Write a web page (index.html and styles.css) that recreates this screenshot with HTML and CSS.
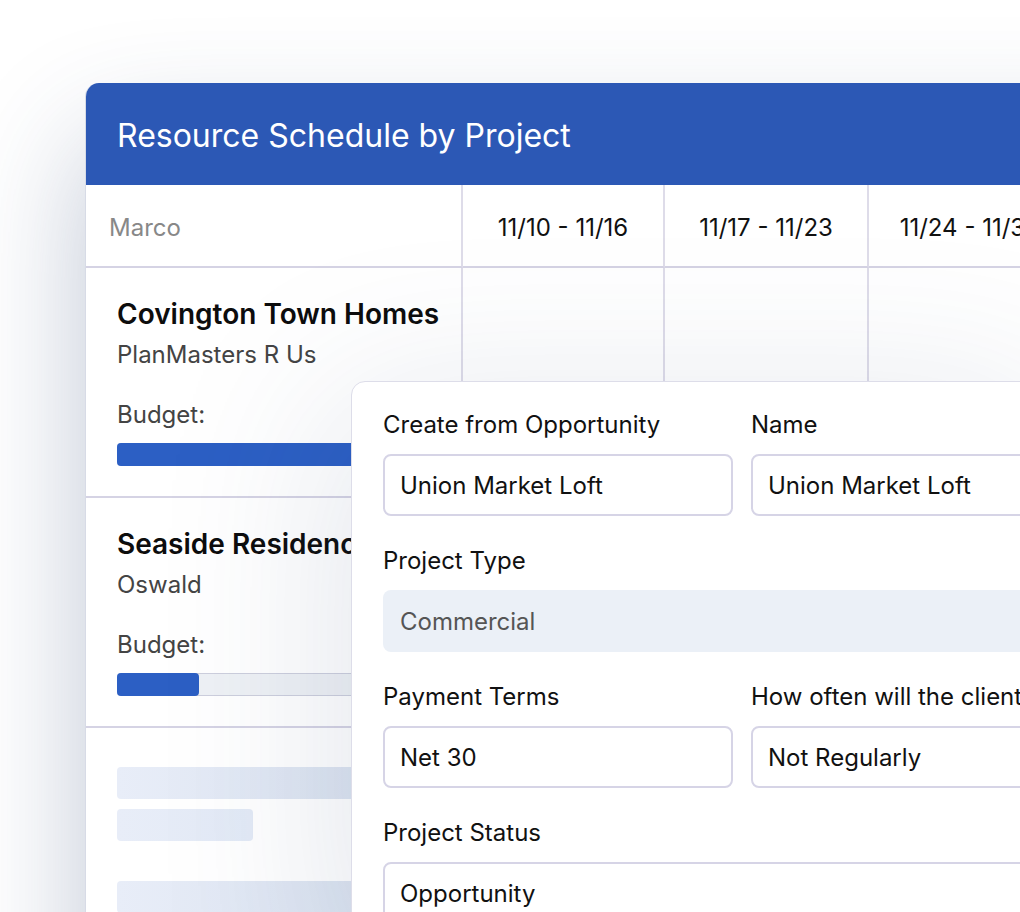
FILE: index.html
```html
<!DOCTYPE html>
<html lang="en">
<head>
<meta charset="utf-8">
<title>Resource Schedule by Project</title>
<link rel="stylesheet" href="styles.css">
</head>
<body>
<div class="stage">
  <div class="card">
    <div class="card-header">Resource Schedule by Project</div>
    <div class="grid">
      <div class="cell head head-name">Marco</div>
      <div class="cell head">11/10 - 11/16</div>
      <div class="cell head">11/17 - 11/23</div>
      <div class="cell head">11/24 - 11/30</div>
      <div class="cell head">12/01 - 12/07</div>

      <div class="cell project">
        <div class="p-title">Covington Town Homes</div>
        <div class="p-sub">PlanMasters R Us</div>
        <div class="p-budget">Budget:</div>
        <div class="bar"><div class="bar-fill" style="width:100%"></div></div>
      </div>
      <div class="cell"></div>
      <div class="cell"></div>
      <div class="cell"></div>
      <div class="cell"></div>

      <div class="cell project">
        <div class="p-title">Seaside Residence</div>
        <div class="p-sub">Oswald</div>
        <div class="p-budget">Budget:</div>
        <div class="bar"><div class="bar-fill" style="width:82px"></div></div>
      </div>
      <div class="cell"></div>
      <div class="cell"></div>
      <div class="cell"></div>
      <div class="cell"></div>

      <div class="cell project skeleton-cell">
        <div class="sk sk-long"></div>
        <div class="sk sk-short"></div>
        <div class="sk sk-long sk-gap"></div>
      </div>
      <div class="cell"></div>
      <div class="cell"></div>
      <div class="cell"></div>
      <div class="cell"></div>
    </div>
  </div>

  <div class="modal">
    <div class="form-row">
      <div class="field">
        <div class="label">Create from Opportunity</div>
        <div class="input">Union Market Loft</div>
      </div>
      <div class="field">
        <div class="label">Name</div>
        <div class="input">Union Market Loft</div>
      </div>
    </div>
    <div class="form-row">
      <div class="field full">
        <div class="label">Project Type</div>
        <div class="input filled">Commercial</div>
      </div>
    </div>
    <div class="form-row">
      <div class="field">
        <div class="label">Payment Terms</div>
        <div class="input">Net 30</div>
      </div>
      <div class="field">
        <div class="label">How often will the client be billed?</div>
        <div class="input">Not Regularly</div>
      </div>
    </div>
    <div class="form-row">
      <div class="field full">
        <div class="label">Project Status</div>
        <div class="input">Opportunity</div>
      </div>
    </div>
  </div>
</div>
</body>
</html>
```

FILE: styles.css
```css
* { box-sizing: border-box; }

html, body {
  margin: 0;
  padding: 0;
}

body {
  width: 1020px;
  height: 912px;
  overflow: hidden;
  background: #ffffff;
  font-family: Inter, "Noto Sans", "Liberation Sans", sans-serif;
  color: #111111;
}

.stage {
  position: relative;
  width: 1020px;
  height: 912px;
  overflow: hidden;
  padding: 83px 0 0 85px;
}

.card {
  width: 1200px;
  height: 1000px;
  background: #ffffff;
  border-top-left-radius: 14px;
  border-left: 1px solid #d7dbe6;
  box-shadow: 0 60px 120px rgba(45, 70, 115, 0.3);
  overflow: hidden;
}

.card-header {
  height: 102px;
  background: #2c58b5;
  color: #ffffff;
  font-size: 32px;
  display: flex;
  align-items: center;
  padding-left: 31px;
  padding-top: 2px;
}

.grid {
  display: grid;
  grid-template-columns: 377px 202px 204px 204px 204px;
  grid-template-rows: 83px 230px 230px 300px;
}

.cell {
  border-right: 2px solid #dedce9;
  border-bottom: 2px solid #d5d3e4;
}

.head {
  display: flex;
  align-items: center;
  justify-content: center;
  font-size: 24px;
  color: #111111;
  padding-top: 4px;
  white-space: nowrap;
  overflow: hidden;
}

.head-name {
  justify-content: flex-start;
  padding-left: 23px;
  color: #888888;
}

.project {
  padding: 29px 0 0 31px;
  overflow: hidden;
  white-space: nowrap;
}

.p-title {
  font-size: 28px;
  font-weight: 600;
  line-height: 34px;
  color: #0d0d0d;
}

.p-sub {
  font-size: 24px;
  line-height: 30px;
  color: #444444;
  margin-top: 9px;
}

.p-budget {
  font-size: 24px;
  line-height: 30px;
  color: #444444;
  margin-top: 30px;
}

.bar {
  margin-top: 13px;
  width: 330px;
  height: 23px;
  background: #eef1f5;
  border-top: 1px solid #cdcfdd;
  border-bottom: 1px solid #cdcfdd;
  border-radius: 4px;
  position: relative;
}

.bar-fill {
  position: absolute;
  left: 0;
  top: -1px;
  bottom: -1px;
  background: #2c5fc4;
  border-radius: 4px;
}

.skeleton-cell {
  padding-top: 39px;
  border-bottom: none;
}

.sk {
  height: 32px;
  border-radius: 4px;
  background: linear-gradient(90deg, #e8edf8 0%, #d9e2ef 100%);
}

.sk-long { width: 320px; }

.sk-short {
  width: 136px;
  margin-top: 10px;
  background: linear-gradient(90deg, #e8edf8 0%, #e3eaf6 100%);
}

.sk-gap { margin-top: 40px; }

.modal {
  position: absolute;
  left: 351px;
  top: 381px;
  width: 720px;
  height: 600px;
  background: #ffffff;
  border: 1px solid #dddde9;
  border-radius: 14px;
  padding: 29px 0 0 31px;
  box-shadow: -20px 20px 180px rgba(45, 70, 115, 0.13);
}

.form-row {
  display: flex;
  gap: 18px;
  margin-bottom: 31px;
}

.field { width: 350px; flex: none; }
.field.full { width: 720px; }

.label {
  font-size: 24px;
  line-height: 28px;
  color: #111111;
  margin-bottom: 15px;
  white-space: nowrap;
}

.input {
  height: 62px;
  border: 2px solid #d6d4e6;
  border-radius: 8px;
  font-size: 24px;
  display: flex;
  align-items: center;
  padding-left: 15px;
  color: #111111;
  white-space: nowrap;
}

.input.filled {
  border: none;
  background: #ebf0f7;
  color: #555555;
  padding-left: 17px;
}
```
